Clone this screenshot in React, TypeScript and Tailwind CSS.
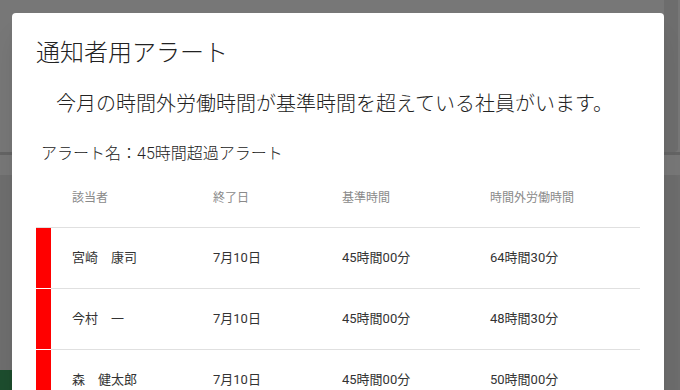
import React from 'react'

const rows = [
    { name: '宮崎　康司', end: '7月10日', base: '45時間00分', over: '64時間30分' },
    { name: '今村　一', end: '7月10日', base: '45時間00分', over: '48時間30分' },
    { name: '森　健太郎', end: '7月10日', base: '45時間00分', over: '50時間00分' },
]

export default function App() {
    return (
        <div
            className="relative w-[680px] h-[390px] overflow-hidden bg-[#eeeeee]"
            style={{ fontFamily: 'Roboto, "Noto Sans CJK JP", sans-serif' }}
        >
            {/* page underneath the dialog */}
            <div className="flex flex-col h-full">
                <div className="h-[152px] flex justify-end">
                    <div className="w-[14px] mr-[2px] h-full bg-[#dadada] rounded-br" />
                </div>
                <div className="h-[3px] bg-[#c8c8c8]" />
                <div className="h-[20px]" />
                <div className="flex-1 flex justify-between bg-[#dcdcdc]">
                    <div className="flex flex-col justify-end w-[12px]">
                        <div className="h-[20px] bg-[#3a9b5c]" />
                    </div>
                    <div className="w-[14px] mr-[2px] bg-[#d8d8d8] rounded-tr" />
                </div>
            </div>

            {/* backdrop */}
            <div className="absolute inset-0 bg-black/50" />

            {/* dialog */}
            <div className="absolute left-[12px] top-[13px] w-[652px] h-[400px] bg-white rounded shadow-xl px-6 pt-6">
                <h2 className="text-[24px] leading-8 font-light text-[#222]">通知者用アラート</h2>
                <p className="mt-[21px] pl-5 text-[20px] leading-7 font-light text-[#222]">
                    今月の時間外労働時間が基準時間を超えている社員がいます。
                </p>
                <p className="mt-6 pl-[5px] text-[16px] leading-6 font-light text-[#222]">
                    アラート名：45時間超過アラート
                </p>

                <div className="mt-[2px]">
                    <div className="flex items-center h-[60px] border-b border-[#e0e0e0] text-[12px] text-[#8a8a8a]">
                        <div className="w-[15px]" />
                        <div className="w-[162px] pl-[21px]">該当者</div>
                        <div className="w-[129px]">終了日</div>
                        <div className="w-[148px]">基準時間</div>
                        <div className="flex-1">時間外労働時間</div>
                    </div>
                    {rows.map((r, i) => (
                        <div key={i} className="flex h-[61px] text-[13px] text-[#333]">
                            <div className="w-[15px] bg-[#ff0000] border-b border-white" />
                            <div className="flex flex-1 items-center border-b border-[#e0e0e0]">
                                <div className="w-[162px] pl-[21px]">{r.name}</div>
                                <div className="w-[129px]">{r.end}</div>
                                <div className="w-[148px]">{r.base}</div>
                                <div className="flex-1">{r.over}</div>
                            </div>
                        </div>
                    ))}
                </div>
            </div>
        </div>
    )
}
